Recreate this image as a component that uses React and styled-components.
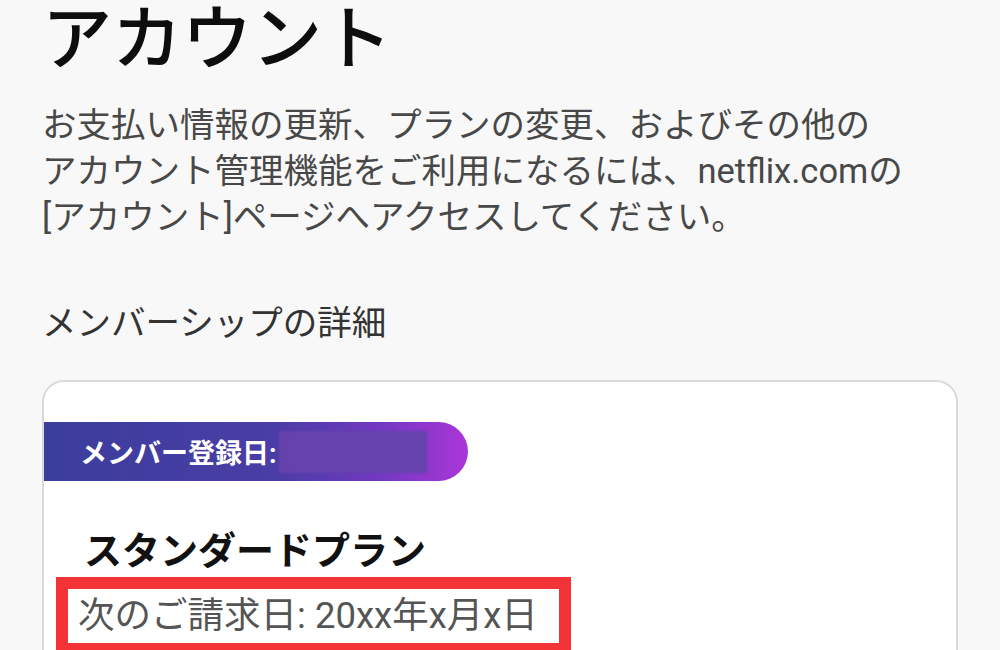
import React from 'react'
import styled, { createGlobalStyle } from 'styled-components'

const GlobalStyle = createGlobalStyle`
  html, body {
    margin: 0;
    padding: 0;
    background: #f8f8f8;
    overflow: hidden;
  }
  body {
    font-family: Roboto, "Noto Sans CJK JP", sans-serif;
    color: #111;
  }
`

function App() {
  return (
    <>
      <GlobalStyle />
      <Page>
        <Title>アカウント</Title>
        <Lead>
          お支払い情報の更新、プランの変更、およびその他の<br />
          アカウント管理機能をご利用になるには、netflix.comの<br />
          [アカウント]ページへアクセスしてください。
        </Lead>
        <SectionLabel>メンバーシップの詳細</SectionLabel>
        <Card>
          <MemberBadge>
            メンバー登録日:
            <Redacted />
          </MemberBadge>
          <CardBody>
            <PlanName>スタンダードプラン</PlanName>
            <Highlight>
              <BillingDate>次のご請求日: 20xx年x月x日</BillingDate>
            </Highlight>
          </CardBody>
        </Card>
      </Page>
    </>
  )
}

export default App

const Page = styled.div`
  padding: 0 42px;
  display: flex;
  flex-direction: column;
`

const Title = styled.h1`
  margin: 0;
  font-size: 70px;
  line-height: 80px;
  font-weight: 500;
  color: #0d0d0d;
`

const Lead = styled.p`
  margin: 22px 0 0 0;
  font-size: 34.5px;
  line-height: 46px;
  color: #484848;
  font-weight: 400;
`

const SectionLabel = styled.h2`
  margin: 60px 0 0 0;
  font-size: 34.5px;
  line-height: 46px;
  font-weight: 400;
  color: #333;
`

// white card holding the membership details
const Card = styled.div`
  margin-top: 34px;
  background: #fff;
  border: 2px solid #d9d9d9;
  border-radius: 22px;
  padding-top: 40px;
  width: 916px;
  box-sizing: border-box;
  height: 400px;
`

const MemberBadge = styled.div`
  display: flex;
  align-items: center;
  width: 424px;
  height: 59px;
  box-sizing: border-box;
  padding-left: 36px;
  border-radius: 0 30px 30px 0;
  background: linear-gradient(90deg, #3b3e9c 0%, #4a3da6 55%, #7438c2 80%, #ab36d8 100%);
  color: #fff;
  font-size: 27px;
  font-weight: 700;
`

const Redacted = styled.span`
  display: inline-block;
  width: 148px;
  height: 42px;
  margin-left: 2px;
  background: #6542ae;
  filter: blur(1px);
`

const CardBody = styled.div`
  display: flex;
  flex-direction: column;
  align-items: flex-start;
  padding: 45px 0 0 12px;
`

const PlanName = styled.div`
  padding-left: 28px;
  font-size: 38px;
  line-height: 50px;
  font-weight: 700;
  color: #111;
`

// red annotation frame around the billing date
const Highlight = styled.div`
  width: 515px;
  box-sizing: border-box;
  margin-top: 1px;
  border: 12px solid #f33336;
  padding: 4px 10px;
  background: #fff;
`

const BillingDate = styled.div`
  font-size: 36.5px;
  line-height: 46px;
  color: #555;
  white-space: nowrap;
`
